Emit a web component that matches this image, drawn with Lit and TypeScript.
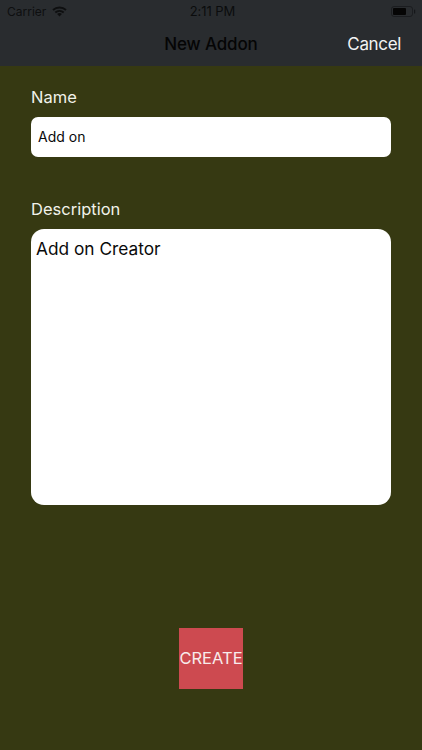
import { LitElement, html, css } from "lit";
import { customElement } from "lit/decorators.js";

@customElement("app-root")
export class AppRoot extends LitElement {
  static styles = css`
    :host {
      display: block;
      width: 422px;
      height: 750px;
      background: #363912;
      font-family: Inter, "Liberation Sans", sans-serif;
      overflow: hidden;
    }
    .top {
      height: 66px;
      background: #292c2f;
      display: flex;
      flex-direction: column;
      box-sizing: border-box;
    }
    .status {
      height: 22px;
      display: grid;
      grid-template-columns: 1fr auto 1fr;
      align-items: center;
      padding: 0 6px 0 7px;
      color: #0b0c0d;
      font-size: 13px;
    }
    .time {
      margin-left: 2px;
      letter-spacing: -0.05px;
    }
    .carrier {
      display: flex;
      align-items: center;
      gap: 6px;
      color: #0e0f10;
      font-size: 12px;
    }
    .battery {
      justify-self: end;
      display: flex;
      align-items: center;
    }
    .nav {
      flex: 1;
      display: grid;
      grid-template-columns: 1fr auto 1fr;
      align-items: center;
      padding: 0 21px;
      margin-top: -1px;
    }
    .title {
      font-size: 17px;
      font-weight: 500;
      letter-spacing: -0.15px;
      color: #050505;
    }
    .cancel {
      justify-self: end;
      font-size: 17px;
      letter-spacing: -0.35px;
      color: #f2f3f3;
    }
    .form {
      padding: 21px 31px 0;
      display: flex;
      flex-direction: column;
    }
    label {
      display: block;
      color: #f1f2ea;
      font-size: 16.5px;
      line-height: 21px;
    }
    .field {
      margin-top: 9px;
      height: 40px;
      background: #fff;
      border-radius: 7px;
      display: flex;
      align-items: center;
      padding: 0 7px 2px;
      box-sizing: border-box;
      font-size: 14px;
      color: #0a0a0a;
    }
    .desc-label {
      margin-top: 42px;
    }
    .area {
      margin-top: 9px;
      height: 276px;
      background: #fff;
      border-radius: 13px;
      padding: 9px 5px;
      box-sizing: border-box;
      font-size: 17.3px;
      line-height: 22px;
      color: #0a0a0a;
    }
    .actions {
      display: flex;
      justify-content: center;
      margin-top: 123px;
    }
    .create {
      width: 64px;
      height: 61px;
      background: #cd4a50;
      color: #f8ecec;
      display: flex;
      align-items: center;
      justify-content: center;
      padding-bottom: 2px;
      box-sizing: border-box;
      font-size: 16.5px;
      white-space: nowrap;
    }
  `;

  render() {
    return html`
      <div class="top">
        <div class="status">
          <div class="carrier">
            <span>Carrier</span>
            <svg width="15" height="11" viewBox="0 0 15 11">
              <path fill="none" stroke="#0e0f10" stroke-width="1.9" d="M1 4C4.7.6 10.3.6 14 4" />
              <path fill="none" stroke="#0e0f10" stroke-width="1.9" d="M3.3 6.5c2.4-2.1 6-2.1 8.4 0" />
              <path fill="#0e0f10" d="M7.5 6.9c-1 0-1.8.4-2.4 1l2.4 2.6 2.4-2.6c-.6-.6-1.4-1-2.4-1z" />
            </svg>
          </div>
          <div class="time">2:11 PM</div>
          <div class="battery">
            <svg width="25" height="11" viewBox="0 0 25 11">
              <rect x=".5" y=".5" width="21" height="10" rx="2.5" fill="none" stroke="#15171a" stroke-opacity=".7" />
              <rect x="2" y="2" width="13" height="7" rx="1" fill="#050505" />
              <rect x="23" y="3.5" width="1.2" height="4" rx=".6" fill="#15171a" />
            </svg>
          </div>
        </div>
        <div class="nav">
          <span></span>
          <span class="title">New Addon</span>
          <span class="cancel">Cancel</span>
        </div>
      </div>
      <div class="form">
        <label>Name</label>
        <div class="field">Add on</div>
        <label class="desc-label">Description</label>
        <div class="area">Add on Creator</div>
        <div class="actions">
          <div class="create">CREATE</div>
        </div>
      </div>
    `;
  }
}
